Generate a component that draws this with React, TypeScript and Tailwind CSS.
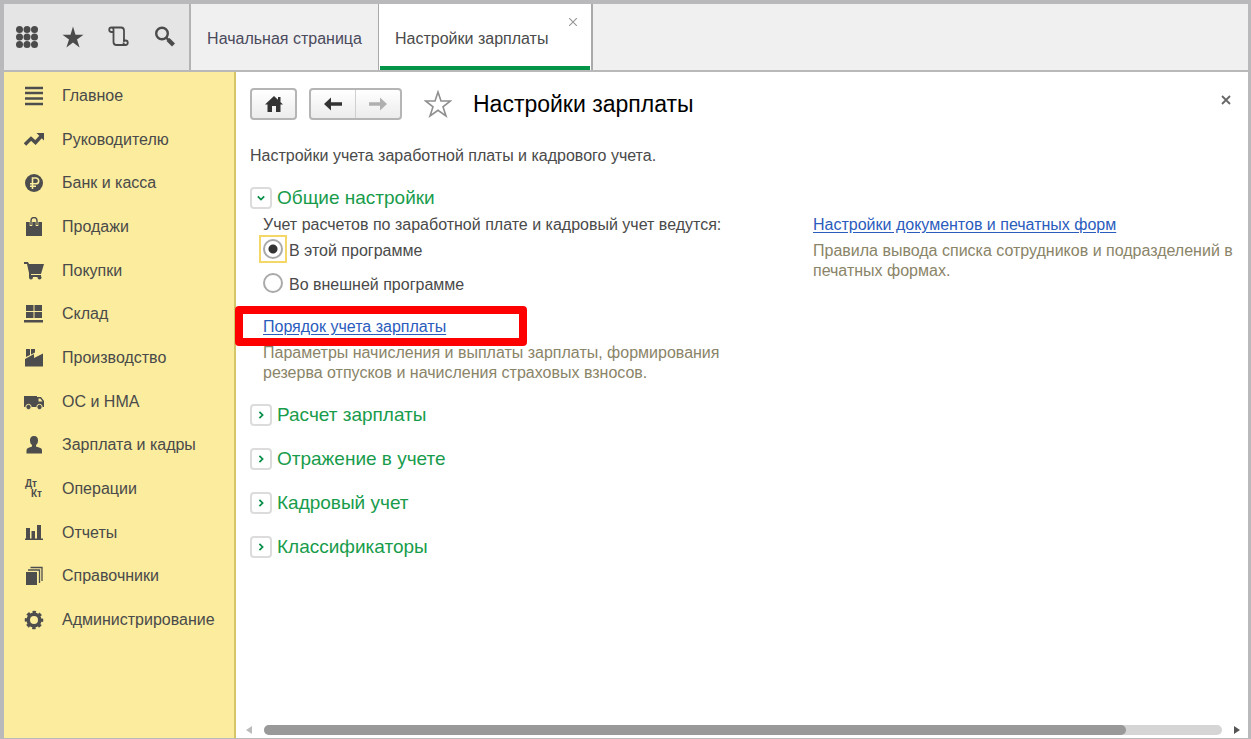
import { useState, type ReactNode } from "react";

type MenuItem = { label: string; icon: ReactNode };

const MENU: MenuItem[] = [
  {
    label: "Главное",
    icon: <path d="M1 2h18M1 7h18M1 12.500h18M1 18h18" stroke="currentColor" strokeWidth="2.400" />,
  },
  {
    label: "Руководителю",
    icon: (
      <>
        <path d="M1 14.500l6-6 4.500 4L17 6.500" fill="none" stroke="currentColor" strokeWidth="3.400" />
        <path d="M12.500 3H20v7.500z" />
      </>
    ),
  },
  {
    label: "Банк и касса",
    icon: (
      <>
        <circle cx="10" cy="10" r="9" />
        <path
          d="M8.500 16V5h3.300a2.900 2.900 0 010 5.800H6M6 13.300h6"
          fill="none"
          stroke="#fbec9e"
          strokeWidth="1.600"
        />
      </>
    ),
  },
  {
    label: "Продажи",
    icon: (
      <>
        <path d="M2 5h16v14H2z" />
        <path d="M7 9V4a3 3 0 016 0V9" fill="none" stroke="#fbec9e" strokeWidth="2.600" />
        <path d="M7 8V3.500a3 3 0 016 0V8" fill="none" stroke="currentColor" strokeWidth="1.400" />
      </>
    ),
  },
  {
    label: "Покупки",
    icon: (
      <>
        <path d="M0 1h4l1 2h15l-3 10H7v1h10v2H5v-4L3 3H0z" />
        <circle cx="7" cy="16.500" r="2" />
        <circle cx="15.500" cy="16.500" r="2" />
      </>
    ),
  },
  {
    label: "Склад",
    icon: <path d="M2 1h7.500v6H2zM10.500 1H18v6h-7.500zM2 8h7.500v6H2zM10.500 8H18v6h-7.500zM0 16h19v2.500H0z" />,
  },
  {
    label: "Производство",
    icon: <path d="M2 1h4v6l-4 2zM7 1h4v3.500L7 6.500zM1 11l9-5v4l9-4.500V18.500H1z" />,
  },
  {
    label: "ОС и НМА",
    icon: (
      <>
        <path d="M0 4h13v11H0z" />
        <path d="M13 5h4l3 4v6h-7zM14.500 6.500v3h4l-2.200-3z" fillRule="evenodd" />
        <circle cx="4.500" cy="15" r="2.700" stroke="#fbec9e" />
        <circle cx="15.500" cy="15" r="2.700" stroke="#fbec9e" />
      </>
    ),
  },
  {
    label: "Зарплата и кадры",
    icon: (
      <path d="M10 1c3 0 4.300 2 4 5-.2 2-.8 3.200-2 4v1.500l4.500 1.500c1 .4 1.500 1.500 1.500 3v2.500H2.500V16c0-1.500.5-2.600 1.500-3L8 11.500V10C6.800 9.200 6.200 8 6 6c-.3-3 1-5 4-5z" />
    ),
  },
  {
    label: "Операции",
    icon: (
      <>
        <text x="1" y="8" fontSize="10" fontWeight="700" fontFamily="Liberation Sans, sans-serif">
          Дт
        </text>
        <text x="7" y="18" fontSize="10" fontWeight="700" fontFamily="Liberation Sans, sans-serif">
          Кт
        </text>
      </>
    ),
  },
  {
    label: "Отчеты",
    icon: <path d="M2 5h4v11H2zM7.500 8h3.500v8H7.500zM13 2h4v14h-4zM1 15.500h18V17H1z" />,
  },
  {
    label: "Справочники",
    icon: (
      <>
        <path d="M2 6h11v13H2z" />
        <path d="M4 4h11.500v13M6.500 1.500H18V15" fill="none" stroke="currentColor" strokeWidth="1.300" />
      </>
    ),
  },
  {
    label: "Администрирование",
    icon: (
      <>
        <circle cx="10" cy="10" r="5.800" fill="none" stroke="currentColor" strokeWidth="3.600" />
        <circle
          cx="10"
          cy="10"
          r="8"
          fill="none"
          stroke="currentColor"
          strokeWidth="2.500"
          strokeDasharray="3.400 2.883"
          strokeDashoffset="1.700"
        />
      </>
    ),
  },
];

function SectionHeader({ title, open = false }: { title: string; open?: boolean }) {
  return (
    <h2>
      <button type="button" aria-expanded={open} className="flex h-6 items-center gap-[5px] text-[19px] text-[#189c4b]">
        <span className="flex size-[22px] items-center justify-center rounded-[4px] border-2 border-[#dcdcdc]">
          <svg viewBox="0 0 10 10" className="size-2" fill="none" stroke="#078f48" strokeWidth="2.200">
            <path d={open ? "M1 3l4 4 4-4" : "M3 1l4 4-4 4"} />
          </svg>
        </span>
        {title}
      </button>
    </h2>
  );
}

function RadioRow({
  label,
  checked,
  onChange,
}: {
  label: string;
  checked: boolean;
  onChange: () => void;
}) {
  return (
    <label className="flex h-7 items-center gap-0.5">
      <span className={`flex size-7 items-center justify-center border-2 ${checked ? "border-[#f5d768]" : "border-transparent"}`}>
        <input
          type="radio"
          name="accounting"
          checked={checked}
          onChange={onChange}
          className="size-5 appearance-none rounded-full border-2 border-[#a9a9a9] bg-white outline-none checked:bg-[radial-gradient(circle,#333_0_4px,#fff_5px)]"
        />
      </span>
      <span className="pt-1">{label}</span>
    </label>
  );
}

function TopBar() {
  return (
    <header className="flex h-[68px] shrink-0 border-b-2 border-[#b9b9b9] bg-[#f0f0f0]">
      <div className="flex w-[187px] items-center gap-[22px] border-r-2 border-[#b3b3b3] bg-[#e5e5e5] pl-[11px] text-[#4b4b4b]">
        <button type="button" aria-label="Меню">
          <svg viewBox="0 0 24 24" className="size-6" fill="currentColor">
            {[4.500, 12, 19.500].map((y) =>
              [4.500, 12, 19.500].map((x) => <circle key={`${x}-${y}`} cx={x} cy={y} r="3.500" />)
            )}
          </svg>
        </button>
        <button type="button" aria-label="Избранное">
          <svg viewBox="0 0 24 24" className="size-6" fill="currentColor">
            <path d="M12 1.500l2.500 8.200H22.500l-6.500 4.800 2.600 8L12 17.600l-6.600 4.900 2.600-8L1.500 9.700h8z" />
          </svg>
        </button>
        <button type="button" aria-label="История">
          <svg viewBox="0 0 24 24" className="size-6" fill="none" stroke="currentColor" strokeWidth="1.800">
            <path d="M4.500 2.500H14q3 0 3 3V16M4.500 2.500a2.200 2.200 0 100 4.500H6.500V17q0 3 3 3H19M6.500 7V4.500q0-2-2-2" />
            <path d="M17 17v-1.500h1.500a2.200 2.200 0 110 4.500q-2 0-2-2.500" />
          </svg>
        </button>
        <button type="button" aria-label="Поиск">
          <svg viewBox="0 0 24 24" className="size-6" fill="none" stroke="currentColor">
            <circle cx="9" cy="8.500" r="5.800" strokeWidth="2.400" />
            <path d="M13.200 12.700l2.500 2.500" strokeWidth="2.400" />
            <path d="M15 14.500l5.500 5.500" strokeWidth="4.200" />
          </svg>
        </button>
      </div>
      <nav className="flex" aria-label="Вкладки">
        <button type="button" className="w-[188px] border-r border-[#aaa] pt-1 text-[#4a4a5c]">
          Начальная страница
        </button>
        <div className="relative flex w-[214px] border-r-2 border-[#aaa] bg-white px-px">
          <button type="button" className="flex-1 border-b-4 border-[#059549] pt-2 pl-[15px] text-left">
            Настройки зарплаты
          </button>
          <button type="button" aria-label="Закрыть вкладку" className="absolute top-[14px] right-[14px]">
            <svg viewBox="0 0 8 8" className="size-2" stroke="#999" strokeWidth="1.200">
              <path d="M0 0l8 8M8 0L0 8" />
            </svg>
          </button>
        </div>
      </nav>
    </header>
  );
}

function Sidebar() {
  return (
    <nav className="w-[232px] shrink-0 border-r-2 border-[#d6c565] bg-[#fbec9e] pt-0.5" aria-label="Разделы">
      <ul className="grid h-[568px] auto-rows-fr">
        {MENU.map((item) => (
          <li key={item.label} className="flex">
            <button type="button" className="flex flex-1 items-center gap-[18px] pl-5 text-left">
              <svg viewBox="0 0 20 20" className="size-5 shrink-0 text-[#4d4d4d]" fill="currentColor">
                {item.icon}
              </svg>
              {item.label}
            </button>
          </li>
        ))}
      </ul>
    </nav>
  );
}

function FormToolbar() {
  const face = "bg-linear-to-b from-white to-[#ececec]";
  return (
    <div className="flex h-8 items-center pr-[17px]">
      <button
        type="button"
        aria-label="Домой"
        className={`flex h-full w-[47px] items-center justify-center rounded-[4px] border-2 border-[#b5b5b5] ${face}`}
      >
        <svg viewBox="0 0 20 18" className="h-[18px] w-5" fill="#333">
          <path d="M10 1l9 8.500h-2.500V17h-4.500v-6H8v6H3.500V9.500H1zM14 2h2.500v5L14 5z" />
        </svg>
      </button>
      <div className={`ml-3 flex h-full w-[93px] rounded-[4px] border-2 border-[#b5b5b5] ${face}`}>
        <button type="button" aria-label="Назад" className="flex flex-1 items-center justify-center border-r border-[#d0d0d0]">
          <svg viewBox="0 0 18 14" className="h-[14px] w-[18px]" fill="#333">
            <path d="M0 7l7-6.500v4.700h11v3.600H7v4.700z" />
          </svg>
        </button>
        <button type="button" aria-label="Вперед" className="flex flex-1 items-center justify-center">
          <svg viewBox="0 0 18 14" className="h-[14px] w-[18px]" fill="#b0b0b0">
            <path d="M18 7l-7-6.500v4.700H0v3.600h11v4.700z" />
          </svg>
        </button>
      </div>
      <button type="button" aria-label="В избранное" className="ml-[22px]">
        <svg viewBox="0 0 28 28" className="size-7" fill="none" stroke="#8f8f8f" strokeWidth="1.600">
          <path d="M14 2l3 9h9.500l-7.500 5.800 3 9.200-8-5.700-8 5.700 3-9.200L1.500 11H11z" />
        </svg>
      </button>
      <h1 className="ml-[21px] text-[23px] leading-8 text-black">Настройки зарплаты</h1>
      <button type="button" aria-label="Закрыть" className="mb-2 ml-auto">
        <svg viewBox="0 0 10 10" className="size-[10px]" stroke="#666" strokeWidth="1.800">
          <path d="M1 1l8 8M9 1L1 9" />
        </svg>
      </button>
    </div>
  );
}

export default function App() {
  const [internal, setInternal] = useState(true);

  return (
    <div className="flex min-h-screen flex-col border-t-4 border-r-3 border-b border-l-4 border-[#b9b9bb] bg-white font-['Liberation_Sans',Arial,sans-serif] text-base leading-5 text-[#4a4a4a]">
      <TopBar />
      <div className="flex flex-1">
        <Sidebar />
        <main className="flex min-w-0 flex-1 flex-col pt-4 pl-[14px]">
          <FormToolbar />
          <p className="mt-[26px]">Настройки учета заработной платы и кадрового учета.</p>

          <div className="mt-5 flex flex-col gap-5">
            <section>
              <SectionHeader title="Общие настройки" open />
              <div className="mt-[5px] grid grid-cols-[550px_1fr] pl-[13px]">
                <div className="pr-14">
                  <fieldset>
                    <legend>Учет расчетов по заработной плате и кадровый учет ведутся:</legend>
                    <div className="-ml-1 flex flex-col gap-1.5">
                      <RadioRow label="В этой программе" checked={internal} onChange={() => setInternal(true)} />
                      <RadioRow label="Во внешней программе" checked={!internal} onChange={() => setInternal(false)} />
                    </div>
                  </fieldset>
                  <div className="relative mt-5">
                    <a href="#salary" className="text-[#2a5cbd] underline underline-offset-2">
                      Порядок учета зарплаты
                    </a>
                    {/* highlight frame */}
                    <div className="pointer-events-none absolute -top-[11px] -left-7 h-10 w-[292px] rounded-[4px] border-8 border-[#fe0000]" />
                  </div>
                  <p className="mt-1.5 text-[#8a8468]">
                    Параметры начисления и выплаты зарплаты, формирования резерва отпусков и начисления страховых взносов.
                  </p>
                </div>
                <div>
                  <a href="#forms" className="text-[#2a5cbd] underline underline-offset-2">
                    Настройки документов и печатных форм
                  </a>
                  <p className="mt-1.5 text-[#8a8468]">
                    Правила вывода списка сотрудников и подразделений в печатных формах.
                  </p>
                </div>
              </div>
            </section>
            <SectionHeader title="Расчет зарплаты" />
            <SectionHeader title="Отражение в учете" />
            <SectionHeader title="Кадровый учет" />
            <SectionHeader title="Классификаторы" />
          </div>

          {/* horizontal scrollbar */}
          <div className="mt-auto flex items-center pr-2 pb-[3px]">
            <svg viewBox="0 0 6 8" className="-ml-1 h-2 w-1.5" fill="#bbb">
              <path d="M6 0v8L0 4z" />
            </svg>
            <div className="mx-3 h-[10px] flex-1 rounded-full bg-[#d5d5d5]">
              <div className="h-full w-[90%] rounded-full bg-[#999]" />
            </div>
            <svg viewBox="0 0 6 8" className="h-2 w-1.5" fill="#555">
              <path d="M0 0v8l6-4z" />
            </svg>
          </div>
        </main>
      </div>
    </div>
  );
}
